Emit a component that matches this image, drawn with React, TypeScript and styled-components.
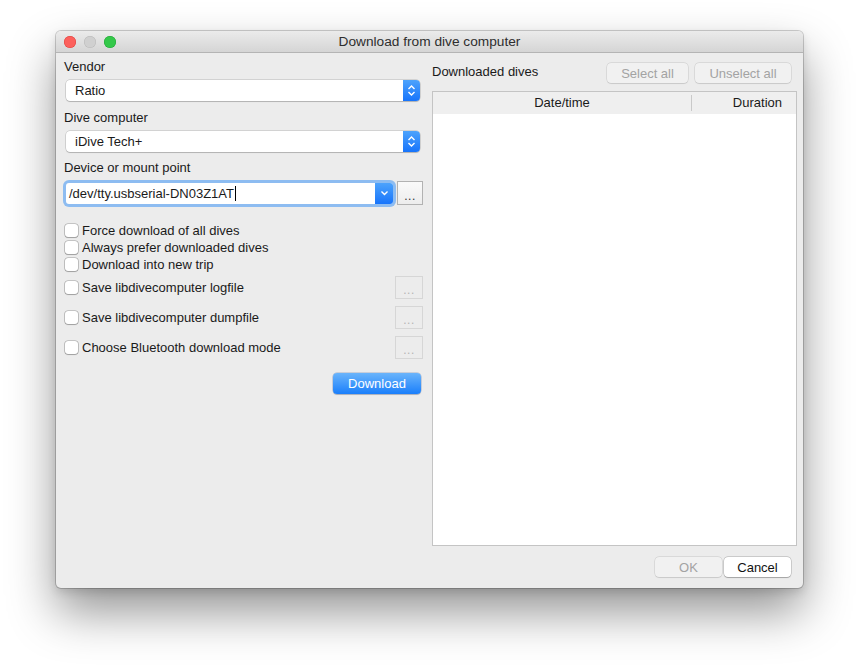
import React from "react";
import styled, { createGlobalStyle } from "styled-components";

const GlobalStyle = createGlobalStyle`
  html, body {
    margin: 0;
    padding: 0;
    background: #ffffff;
  }
  body {
    font-family: "Liberation Sans", Arial, sans-serif;
    font-size: 13px;
    color: #1a1a1a;
  }
`;

const Page = styled.div`
  width: 859px;
  height: 669px;
  padding: 31px 0 0 56px;
  box-sizing: border-box;
`;

const Window = styled.div`
  width: 747px;
  height: 557px;
  display: flex;
  flex-direction: column;
  background: #ececec;
  border-radius: 5px;
  overflow: hidden;
  box-shadow: 0 0 0 1px rgba(0, 0, 0, 0.18), 0 24px 48px rgba(0, 0, 0, 0.42),
    0 4px 10px rgba(0, 0, 0, 0.12);
`;

const TitleBar = styled.div`
  height: 22px;
  flex: none;
  display: flex;
  align-items: center;
  position: relative;
  background: linear-gradient(#ebebeb, #d5d5d5);
  border-bottom: 1px solid #b4b4b4;
  box-sizing: border-box;
`;

const Lights = styled.div`
  display: flex;
  gap: 8px;
  padding-left: 8px;
`;

const Light = styled.span<{ $color: string; $border: string }>`
  width: 12px;
  height: 12px;
  border-radius: 50%;
  background: ${(p) => p.$color};
  box-shadow: inset 0 0 0 0.5px ${(p) => p.$border};
`;

const Title = styled.div`
  position: absolute;
  left: 0;
  right: 0;
  text-align: center;
  font-size: 13.7px;
  color: #2e2e2e;
  pointer-events: none;
`;

const Body = styled.div`
  flex: 1;
  display: flex;
  flex-direction: column;
  padding: 6px 6px 11px 8px;
`;

const Columns = styled.div`
  flex: 1;
  display: flex;
  gap: 9px;
  min-height: 0;
`;

const LeftCol = styled.div`
  width: 359px;
  display: flex;
  flex-direction: column;
`;

const Label = styled.div`
  line-height: 16px;
  height: 16px;
`;

const Field = styled.div<{ $gap?: number }>`
  display: flex;
  flex-direction: column;
  gap: 5px;
  margin-bottom: ${(p) => p.$gap ?? 9}px;
`;

const Select = styled.div`
  margin-left: 2px;
  width: 354px;
  height: 21px;
  display: flex;
  align-items: center;
  background: #fff;
  border-radius: 4px;
  box-shadow: 0 0 0 0.5px rgba(0, 0, 0, 0.22), 0 1px 1px rgba(0, 0, 0, 0.15);
  box-sizing: border-box;
  overflow: hidden;
`;

const SelectText = styled.span`
  flex: 1;
  padding-left: 9px;
`;

const Stepper = styled.span`
  width: 17px;
  height: 100%;
  display: flex;
  align-items: center;
  justify-content: center;
  background: linear-gradient(#4da3fc, #1774fb);
`;

const ComboRow = styled.div`
  display: flex;
  align-items: center;
  gap: 4px;
  margin-bottom: 17px;
`;

const Combo = styled.div`
  margin-left: 2px;
  width: 327px;
  height: 21px;
  display: flex;
  align-items: center;
  background: #fff;
  border-radius: 3px;
  box-shadow: 0 0 0 3px rgba(82, 158, 244, 0.62);
  overflow: hidden;
`;

const ComboText = styled.span`
  flex: 1;
  padding-left: 3px;
  display: flex;
  align-items: center;
`;

const Caret = styled.span`
  display: inline-block;
  width: 1px;
  height: 15px;
  background: #000;
  margin-left: 1px;
`;

const ComboArrow = styled.span`
  width: 18px;
  height: 100%;
  display: flex;
  align-items: center;
  justify-content: center;
  background: linear-gradient(#4da3fc, #1774fb);
`;

const DotsButton = styled.button<{ $disabled?: boolean }>`
  width: ${(p) => (p.$disabled ? 28 : 26)}px;
  height: ${(p) => (p.$disabled ? 23 : 24)}px;
  margin-left: auto;
  padding: 0 0 2px;
  font-family: inherit;
  font-size: 12px;
  line-height: 12px;
  letter-spacing: 0.5px;
  color: ${(p) => (p.$disabled ? "#b4b4b4" : "#333")};
  background: ${(p) => (p.$disabled ? "#ececec" : "linear-gradient(#fafafa, #ededed)")};
  border: 1px solid ${(p) => (p.$disabled ? "#d6d6d6" : "#b2b2b2")};
  border-radius: 0;
  display: flex;
  align-items: flex-end;
  justify-content: center;
`;

const CheckRow = styled.label<{ $height: number }>`
  display: flex;
  align-items: center;
  height: ${(p) => p.$height}px;
  gap: 4px;
  padding-left: 1px;
`;

const CheckBox = styled.span`
  width: 13px;
  height: 13px;
  flex: none;
  background: #fff;
  border-radius: 3px;
  box-shadow: 0 0 0 0.6px rgba(0, 0, 0, 0.3), 0 0.5px 1px rgba(0, 0, 0, 0.2);
`;

const ButtonRows = styled.div`
  display: flex;
  flex-direction: column;
  gap: 7px;
  margin-top: 3px;
`;

const DownloadRow = styled.div`
  display: flex;
  justify-content: flex-end;
  margin-top: 14px;
  padding-right: 2px;
`;

const PrimaryButton = styled.button`
  width: 88px;
  height: 21px;
  font-family: inherit;
  font-size: 13px;
  color: #fff;
  border: none;
  border-radius: 4px;
  background: linear-gradient(#6ab4fb, #1a7ffb);
  box-shadow: 0 0 0 0.5px rgba(0, 40, 120, 0.3), 0 1px 1px rgba(0, 0, 0, 0.15);
`;

const RightCol = styled.div`
  flex: 1;
  display: flex;
  flex-direction: column;
  gap: 8px;
  padding-top: 4px;
  min-height: 0;
`;

const RightHeader = styled.div`
  height: 20px;
  display: flex;
  align-items: center;
  gap: 7px;
  padding-right: 6px;
`;

const SectionTitle = styled.div`
  flex: 1;
  margin-top: -4px;
`;

const FlatButton = styled.button<{ $width: number; $disabled?: boolean }>`
  width: ${(p) => p.$width}px;
  height: 20px;
  font-family: inherit;
  font-size: 13px;
  color: ${(p) => (p.$disabled ? "#a3a3a3" : "#111")};
  background: ${(p) => (p.$disabled ? "#f1f1f1" : "#ffffff")};
  border: none;
  border-radius: 4px;
  box-shadow: 0 0 0 0.5px rgba(0, 0, 0, ${(p) => (p.$disabled ? 0.14 : 0.25)}),
    0 0.5px 1px rgba(0, 0, 0, ${(p) => (p.$disabled ? 0.08 : 0.2)});
`;

const Table = styled.div`
  flex: 1;
  display: flex;
  flex-direction: column;
  background: #fff;
  border: 1px solid #c4c4c4;
`;

const TableHead = styled.div`
  height: 22px;
  display: flex;
  align-items: center;
  background: #efefef;
`;

const HeadCell = styled.div<{ $align: "center" | "right"; $width?: number }>`
  ${(p) => (p.$width ? `width: ${p.$width}px;` : "flex: 1;")}
  text-align: ${(p) => p.$align};
  padding-right: ${(p) => (p.$align === "right" ? 14 : 0)}px;
  height: 16px;
  line-height: 16px;
  box-sizing: border-box;
`;

const HeadDivider = styled.span`
  width: 1px;
  height: 16px;
  background: #c9c9c9;
`;

const Footer = styled.div`
  display: flex;
  justify-content: flex-end;
  gap: 2px;
  margin-top: 11px;
  padding-right: 6px;
`;

const checks = [
  "Force download of all dives",
  "Always prefer downloaded dives",
  "Download into new trip",
];

const fileOptions = [
  "Save libdivecomputer logfile",
  "Save libdivecomputer dumpfile",
  "Choose Bluetooth download mode",
];

const StepperIcon = () => (
  <svg width="9" height="13" viewBox="0 0 9 13">
    <path d="M1.5 5 L4.5 2 L7.5 5 M1.5 8 L4.5 11 L7.5 8" fill="none" stroke="#fff" strokeWidth="1.4" />
  </svg>
);

const ChevronIcon = () => (
  <svg width="9" height="6" viewBox="0 0 9 6">
    <path d="M1.5 1.5 L4.5 4.5 L7.5 1.5" fill="none" stroke="#fff" strokeWidth="1.4" />
  </svg>
);

export default function App() {
  return (
    <>
      <GlobalStyle />
      <Page>
        <Window>
          <TitleBar>
            <Lights>
              <Light $color="#fc605c" $border="#de3f3a" />
              <Light $color="#d0d0d0" $border="#b8b8b8" />
              <Light $color="#34c84a" $border="#1ea433" />
            </Lights>
            <Title>Download from dive computer</Title>
          </TitleBar>
          <Body>
            <Columns>
              <LeftCol>
                <Field>
                  <Label>Vendor</Label>
                  <Select>
                    <SelectText>Ratio</SelectText>
                    <Stepper>
                      <StepperIcon />
                    </Stepper>
                  </Select>
                </Field>
                <Field $gap={8}>
                  <Label>Dive computer</Label>
                  <Select>
                    <SelectText>iDive Tech+</SelectText>
                    <Stepper>
                      <StepperIcon />
                    </Stepper>
                  </Select>
                </Field>
                <Field $gap={0}>
                  <Label>Device or mount point</Label>
                  <ComboRow>
                    <Combo>
                      <ComboText>
                        /dev/tty.usbserial-DN03Z1AT
                        <Caret />
                      </ComboText>
                      <ComboArrow>
                        <ChevronIcon />
                      </ComboArrow>
                    </Combo>
                    <DotsButton>...</DotsButton>
                  </ComboRow>
                </Field>
                {checks.map((c) => (
                  <CheckRow key={c} $height={17}>
                    <CheckBox />
                    {c}
                  </CheckRow>
                ))}
                <ButtonRows>
                  {fileOptions.map((c) => (
                    <CheckRow key={c} $height={23}>
                      <CheckBox />
                      {c}
                      <DotsButton $disabled>...</DotsButton>
                    </CheckRow>
                  ))}
                </ButtonRows>
                <DownloadRow>
                  <PrimaryButton>Download</PrimaryButton>
                </DownloadRow>
              </LeftCol>
              <RightCol>
                <RightHeader>
                  <SectionTitle>Downloaded dives</SectionTitle>
                  <FlatButton $width={81} $disabled>
                    Select all
                  </FlatButton>
                  <FlatButton $width={96} $disabled>
                    Unselect all
                  </FlatButton>
                </RightHeader>
                <Table>
                  <TableHead>
                    <HeadCell $align="center">Date/time</HeadCell>
                    <HeadDivider />
                    <HeadCell $align="right" $width={104}>
                      Duration
                    </HeadCell>
                  </TableHead>
                </Table>
              </RightCol>
            </Columns>
            <Footer>
              <FlatButton $width={67} $disabled>
                OK
              </FlatButton>
              <FlatButton $width={67}>Cancel</FlatButton>
            </Footer>
          </Body>
        </Window>
      </Page>
    </>
  );
}
